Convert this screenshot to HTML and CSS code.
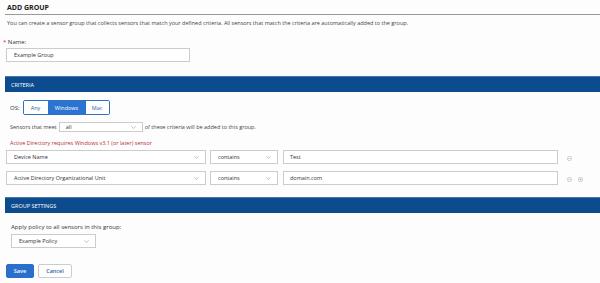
FILE: index.html
```html
<!DOCTYPE html>
<html lang="en">
<head>
  <meta charset="UTF-8" />
  <title>Add Group</title>
  <link rel="stylesheet" href="styles.css">
</head>
<body>
  <div class="page">
    <div class="pageTitle">ADD GROUP</div>
    <p class="intro">You can create a sensor group that collects sensors that match your defined criteria. All sensors that match the criteria are automatically added to the group.</p>

    <div class="nameField">
      <label class="fieldLabel"><span class="req">*</span> Name:</label>
      <div class="textBox nameBox">Example Group</div>
    </div>

    <div class="sectionBar criteriaBar">CRITERIA</div>
    <div class="criteria">
      <div class="osRow">
        <span class="osLabel">OS:</span>
        <div class="segmented">
          <span class="seg">Any</span>
          <span class="seg active">Windows</span>
          <span class="seg">Mac</span>
        </div>
      </div>
      <div class="meetRow">
        <span>Sensors that meet</span>
        <div class="dropdown meetSelect"><span>all</span><svg class="chev" viewBox="0 0 8 5"><path d="M0.5 0.5 L4 4 L7.5 0.5" /></svg></div>
        <span>of these criteria will be added to this group.</span>
      </div>
      <div class="warning">Active Directory requires Windows v3.1 (or later) sensor</div>
      <div class="ruleRow">
        <div class="dropdown fieldSelect"><span>Device Name</span><svg class="chev" viewBox="0 0 8 5"><path d="M0.5 0.5 L4 4 L7.5 0.5" /></svg></div>
        <div class="dropdown opSelect"><span>contains</span><svg class="chev" viewBox="0 0 8 5"><path d="M0.5 0.5 L4 4 L7.5 0.5" /></svg></div>
        <div class="textBox valueBox">Test</div>
        <div class="ruleIcons">
          <svg class="roundIcon" viewBox="0 0 10 10"><circle cx="5" cy="5" r="4.3" /><path d="M2.8 5 H7.2" /></svg>
        </div>
      </div>
      <div class="ruleRow">
        <div class="dropdown fieldSelect"><span>Active Directory Organizational Unit</span><svg class="chev" viewBox="0 0 8 5"><path d="M0.5 0.5 L4 4 L7.5 0.5" /></svg></div>
        <div class="dropdown opSelect"><span>contains</span><svg class="chev" viewBox="0 0 8 5"><path d="M0.5 0.5 L4 4 L7.5 0.5" /></svg></div>
        <div class="textBox valueBox">domain.com</div>
        <div class="ruleIcons">
          <svg class="roundIcon" viewBox="0 0 10 10"><circle cx="5" cy="5" r="4.3" /><path d="M2.8 5 H7.2" /></svg>
          <svg class="roundIcon" viewBox="0 0 10 10"><circle cx="5" cy="5" r="4.3" /><path d="M2.8 5 H7.2 M5 2.8 V7.2" /></svg>
        </div>
      </div>
    </div>

    <div class="sectionBar settingsBar">GROUP SETTINGS</div>
    <div class="settings">
      <div class="policyLabel">Apply policy to all sensors in this group:</div>
      <div class="dropdown policySelect"><span>Example Policy</span><svg class="chev" viewBox="0 0 8 5"><path d="M0.5 0.5 L4 4 L7.5 0.5" /></svg></div>
    </div>

    <div class="actions">
      <button class="btn primary">Save</button>
      <button class="btn">Cancel</button>
    </div>
  </div>
</body>
</html>
```

FILE: styles.css
```css
* {
  box-sizing: border-box;
}
body {
  margin: 0;
  background: #fdfdfd;
  color: #333;
  font-family: 'Open Sans', 'Liberation Sans', sans-serif;
  font-size: 5.5px;
}
.page {
  padding-left: 5px;
  display: flex;
  flex-direction: column;
}
.pageTitle {
  height: 15px;
  padding: 3px 0 0 2px;
  font-size: 7px;
  font-weight: bold;
  color: #222;
  border-bottom: 1px solid #999;
}
.intro {
  margin: 4px 0 0 2px;
  line-height: 8px;
  color: #444;
}
.nameField {
  margin-top: 11px;
  display: flex;
  flex-direction: column;
  gap: 2px;
}
.fieldLabel {
  font-size: 6px;
  line-height: 8px;
  padding-left: 2px;
}
.req {
  color: #c0392b;
  margin-left: -4px;
}
.textBox {
  height: 14px;
  border: 1px solid #ccc;
  background: #fff;
  display: flex;
  align-items: center;
  padding-left: 7px;
  color: #333;
}
.nameBox {
  width: 184px;
  margin-left: 1px;
}
.sectionBar {
  height: 16px;
  background: #0c4b8e;
  border-top: 1px solid #4a78a8;
  color: #fff;
  font-size: 5.5px;
  display: flex;
  align-items: center;
  padding-left: 6px;
}
.criteriaBar {
  margin-top: 14px;
}
.criteria {
  padding: 8px 0 0 5px;
  display: flex;
  flex-direction: column;
}
.osRow {
  display: flex;
  align-items: center;
  gap: 3px;
  font-size: 6px;
}
.segmented {
  display: flex;
  border: 1px solid #2d72c4;
  border-radius: 2px;
  overflow: hidden;
  height: 15px;
}
.seg {
  display: flex;
  align-items: center;
  justify-content: center;
  color: #2d64a8;
  background: #fff;
  font-size: 5.5px;
  width: 24px;
}
.seg + .seg {
  border-left: 1px solid #2d72c4;
}
.seg.active {
  background: #2c74d1;
  color: #fff;
  width: 37px;
}
.meetRow {
  margin-top: 7px;
  display: flex;
  align-items: center;
  gap: 2px;
  color: #444;
}
.dropdown {
  display: flex;
  align-items: center;
  justify-content: space-between;
  border: 1px solid #ccc;
  background: #fff;
  padding: 0 6px 0 7px;
  color: #333;
}
.chev {
  width: 5px;
  height: 3px;
  fill: none;
  stroke: #888;
  stroke-width: 0.9;
}
.meetSelect {
  width: 84px;
  height: 10px;
  padding-left: 6px;
}
.warning {
  margin-top: 7px;
  color: #b83232;
  line-height: 8px;
}
.ruleRow {
  display: flex;
  align-items: center;
  margin-top: 3px;
  margin-left: -4px;
}
.ruleRow + .ruleRow {
  margin-top: 7px;
}
.fieldSelect {
  width: 200px;
  height: 14px;
}
.opSelect {
  width: 68px;
  height: 14px;
  margin-left: 4px;
}
.valueBox {
  width: 275px;
  margin-left: 5px;
  padding-left: 6px;
}
.ruleIcons {
  display: flex;
  gap: 6px;
  margin-left: 9px;
  padding-top: 2px;
}
.roundIcon {
  width: 5px;
  height: 5px;
  fill: none;
  stroke: #999;
  stroke-width: 0.9;
}
.settingsBar {
  margin-top: 12px;
}
.settings {
  padding: 10px 0 0 6px;
  display: flex;
  flex-direction: column;
  gap: 3px;
}
.policyLabel {
  font-size: 6px;
  line-height: 8px;
}
.policySelect {
  width: 85px;
  height: 14px;
}
.actions {
  margin-top: 16px;
  display: flex;
  gap: 4px;
  padding-left: 1px;
}
.btn {
  height: 14px;
  width: 34px;
  font-family: inherit;
  font-size: 5.5px;
  font-weight: 600;
  color: #2d64a8;
  background: #fff;
  border: 1px solid #ccc;
  border-radius: 2px;
  padding: 0;
}
.btn.primary {
  width: 28px;
  background: #2a6fcc;
  border-color: #2a6fcc;
  color: #fff;
}
```
